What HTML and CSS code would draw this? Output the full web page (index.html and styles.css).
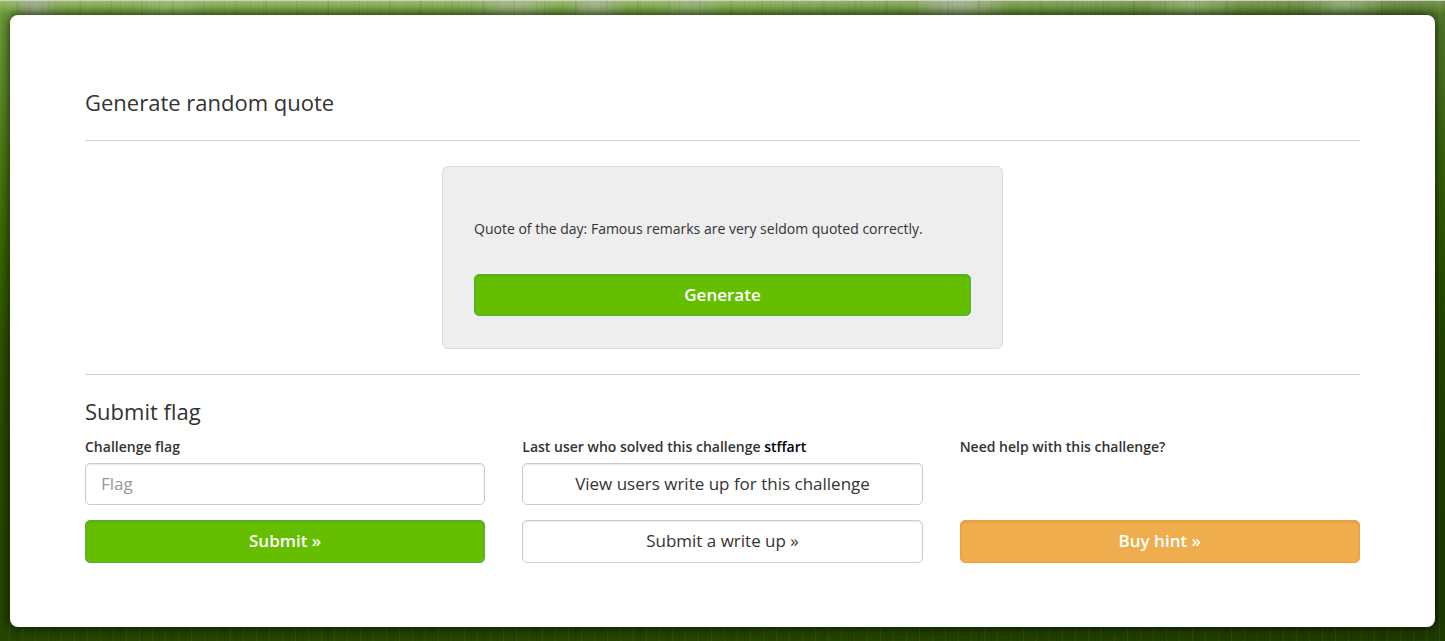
FILE: index.html
```html
<!DOCTYPE html>
<html lang="en">
<head>
<meta charset="utf-8">
<title>Generate random quote</title>
<link rel="stylesheet" href="styles.css">
</head>
<body>
<main class="card">
  <h1 class="heading">Generate random quote</h1>
  <hr class="rule">
  <form class="well">
    <p class="quote">Quote of the day: Famous remarks are very seldom quoted correctly.</p>
    <button class="control btn btn-success" type="button">Generate</button>
  </form>
  <hr class="rule">
  <h2 class="heading">Submit flag</h2>
  <div class="columns">
    <form class="column">
      <label class="label" for="flag">Challenge flag</label>
      <input class="control field" id="flag" type="text" placeholder="Flag">
      <button class="control btn btn-success" type="button">Submit »</button>
    </form>
    <section class="column">
      <p class="label">Last user who solved this challenge <a class="user" href="#">stffart</a></p>
      <button class="control btn" type="button">View users write up for this challenge</button>
      <button class="control btn" type="button">Submit a write up »</button>
    </section>
    <section class="column">
      <p class="label">Need help with this challenge?</p>
      <button class="control btn btn-warning" type="button">Buy hint »</button>
    </section>
  </div>
</main>
</body>
</html>
```
FILE: styles.css
```css
* { box-sizing: border-box; }

html { min-height: 100%; }

body {
  min-height: 100vh;
  margin: 0;
  padding: 15px 10px 14px;
  color: #333;
  font: 14px/20px "Trebuchet MS", "Open Sans", sans-serif;
  background:
    linear-gradient(#ccd0c8 1px, transparent 1px),
    repeating-linear-gradient(90deg, transparent 0 3px, rgba(0, 0, 0, .05) 3px 4px, transparent 4px 9px, rgba(190, 230, 90, .07) 9px 10px, transparent 10px 13px),
    repeating-linear-gradient(90deg, transparent 0 17px, rgba(0, 20, 0, .06) 17px 19px, transparent 19px 31px),
    radial-gradient(25px 20px at 36px 5px, rgba(170, 175, 165, .75), transparent),
    radial-gradient(40px 16px at 170px 5px, rgba(160, 195, 120, .6), transparent),
    radial-gradient(45px 18px at 515px 4px, rgba(175, 190, 155, .8), transparent),
    radial-gradient(32px 18px at 596px 4px, rgba(175, 185, 160, .85), transparent),
    radial-gradient(35px 16px at 690px 4px, rgba(160, 185, 140, .7), transparent),
    radial-gradient(55px 18px at 958px 4px, rgba(175, 185, 165, .85), transparent),
    radial-gradient(50px 18px at 1192px 4px, rgba(160, 190, 130, .7), transparent),
    radial-gradient(45px 18px at 1345px 4px, rgba(165, 190, 140, .7), transparent),
    linear-gradient(90deg, transparent 50%, rgba(10, 25, 0, .25)),
    linear-gradient(#9cc06c 0, #6f9c3a 14px, #618f2a 80px, #4a7d10 160px, #386600 260px, #2d5600 340px, #284c00 450px, #254600 100%);
}

.card {
  padding: 72px 75px 64px;
  border-radius: 8px;
  background: #fff;
  box-shadow: 0 0 12px rgba(0, 0, 0, .85);
}

.heading {
  margin: 0;
  font-size: 22px;
  font-weight: 400;
  line-height: 30px;
}

.rule {
  margin: 25px 0;
  border: 0;
  border-top: 1px solid #d3d3d3;
}

.heading + .rule { margin-top: 23px; }
.rule + .heading { margin-top: -4px; }

.well {
  width: 44%;
  margin: 0 auto;
  padding: 52px 31px 32px;
  border: 1px solid #dcdcdc;
  border-radius: 6px;
  background: #eee;
}

.quote { margin: 0 0 35px; }

.columns {
  display: grid;
  grid-template-columns: repeat(3, 1fr);
  gap: 37px;
  margin-top: 11px;
}

.column {
  display: flex;
  flex-direction: column;
}

.label {
  margin: 0 0 6px;
  font-weight: 600;
}

.user {
  color: #000;
  text-decoration: none;
}

.control {
  width: 100%;
  height: 42px;
  border: 1px solid #ccc;
  border-radius: 5px;
  background: #fff;
  color: #333;
  font: inherit;
  font-size: 17px;
  line-height: 24px;
  box-shadow: inset 0 1px 2px rgba(0, 0, 0, .1);
}

.column .control:last-child {
  height: 43px;
  margin-top: auto;
}

.column .control:nth-child(2):not(:last-child) { margin-bottom: 15px; }

.field { padding: 7px 15px 9px; }
.field::placeholder { color: #999; opacity: 1; }

.btn {
  padding: 7px 16px 8px;
  text-align: center;
  cursor: pointer;
}

.btn-success {
  border-color: #4cae4c;
  background: #65bf00;
  color: #fff;
  font-weight: 600;
}

.btn-warning {
  border-color: #eea236;
  background: #f0ad4e;
  color: #fff;
  font-weight: 600;
}
```
